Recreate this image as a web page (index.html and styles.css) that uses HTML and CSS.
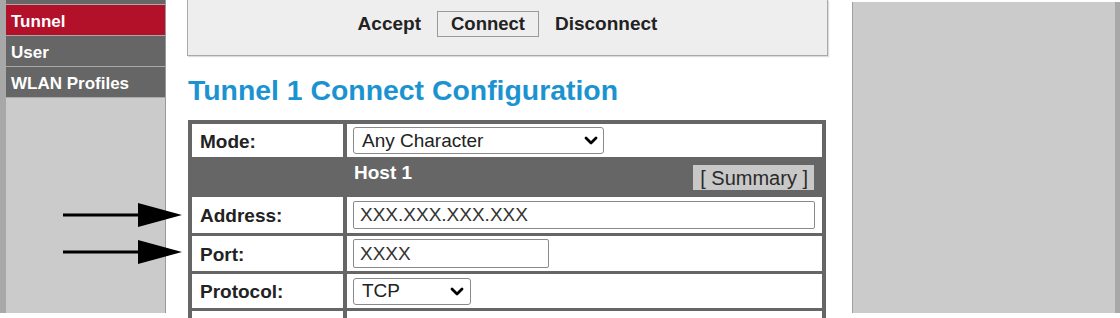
FILE: index.html
```html
<!DOCTYPE html>
<html lang="en">
<head>
<meta charset="utf-8">
<title>Tunnel 1 Connect Configuration</title>
<link rel="stylesheet" href="styles.css">
</head>
<body>
<div class="page">
  <div class="edge"></div>
  <nav class="sidebar">
    <div class="nav-cut"></div>
    <a class="nav-item active">Tunnel</a>
    <a class="nav-item">User</a>
    <a class="nav-item">WLAN Profiles</a>
  </nav>
  <main class="main">
    <div class="actions">
      <span class="action">Accept</span>
      <span class="action current">Connect</span>
      <span class="action">Disconnect</span>
    </div>
    <h1 class="title">Tunnel 1 Connect Configuration</h1>
    <div class="config">
      <div class="label">Mode:</div>
      <div class="field">
        <div class="select select-mode"><span>Any Character</span>
          <svg class="chev" width="14" height="9" viewBox="0 0 14 9"><path d="M2 2 L7 7 L12 2" fill="none" stroke="#000" stroke-width="2.8" stroke-linecap="round" stroke-linejoin="round"/></svg>
        </div>
      </div>
      <div class="label dark"></div>
      <div class="field host">
        <span class="host-title">Host 1</span>
        <span class="summary">[ Summary ]</span>
      </div>
      <div class="label">Address:</div>
      <div class="field"><input class="input input-address" type="text" value="XXX.XXX.XXX.XXX"></div>
      <div class="label">Port:</div>
      <div class="field"><input class="input input-port" type="text" value="XXXX"></div>
      <div class="label">Protocol:</div>
      <div class="field">
        <div class="select select-proto"><span>TCP</span>
          <svg class="chev" width="14" height="9" viewBox="0 0 14 9"><path d="M2 2 L7 7 L12 2" fill="none" stroke="#000" stroke-width="2.8" stroke-linecap="round" stroke-linejoin="round"/></svg>
        </div>
      </div>
      <div class="label"></div>
      <div class="field"></div>
    </div>
  </main>
  <aside class="right"></aside>
  <div class="right-edge"></div>
  <svg class="arrows" width="200" height="318" viewBox="0 0 200 318">
    <rect x="63" y="213.5" width="77" height="3" fill="#000"/>
    <polygon points="138,203 182,215 138,227" fill="#000"/>
    <rect x="63" y="250.5" width="77" height="3" fill="#000"/>
    <polygon points="138,240 182,252 138,264" fill="#000"/>
  </svg>
</div>
</body>
</html>
```

FILE: styles.css
```css
* { box-sizing: border-box; }
html, body { margin: 0; padding: 0; background: #fff; }
body { font-family: "Liberation Sans", Arial, sans-serif; }

.page {
  position: relative;
  display: flex;
  align-items: flex-start;
  width: 1120px;
  height: 318px;
  overflow: hidden;
}

.edge { flex: none; width: 6px; height: 313px; background: #a8a8a8; }

.sidebar {
  flex: none;
  width: 160px;
  height: 313px;
  background: #cbcbcb;
  border-right: 1px solid #9a9a9a;
  display: flex;
  flex-direction: column;
}
.nav-cut { height: 5px; background: #666; border-bottom: 1px solid #aaa; }
.nav-item {
  display: flex;
  align-items: center;
  height: 31px;
  padding: 3px 0 0 5px;
  background: #666;
  color: #fff;
  font-weight: bold;
  font-size: 17px;
  border-bottom: 1px solid #a9a9a9;
}
.nav-item.active { background: #b3102a; }

.main { flex: none; width: 641px; margin-left: 21px; }

.actions {
  height: 56px;
  background: #eee;
  border: 1px solid #aaa;
  border-top: none;
  box-shadow: 1px 1px 1px #ddd;
  display: flex;
  justify-content: center;
  align-items: center;
  gap: 16px;
  padding-bottom: 7px;
}
.action { font-weight: bold; font-size: 19px; color: #222; }
.action.current {
  height: 26px;
  line-height: 24px;
  padding: 0 13px;
  border: 1px solid #999;
  font-size: 18.5px;
}

.title {
  margin: 18px 0 14px 1px;
  font-size: 28.4px;
  line-height: 32px;
  font-weight: bold;
  color: #1c93d1;
}

.config {
  margin-left: 1px;
  width: 638px;
  padding: 4px;
  background: #666;
  display: grid;
  grid-template-columns: 151px 1fr;
  grid-template-rows: 33px 34px 36px 35px 34px 40px;
  column-gap: 4px;
  row-gap: 3px;
}
.label {
  background: #fff;
  display: flex;
  align-items: center;
  padding: 2px 0 0 8px;
  font-weight: bold;
  font-size: 19px;
  color: #222;
}
.label.dark { background: #666; }
.field {
  background: #fff;
  display: flex;
  align-items: center;
  padding: 0 6px;
}
.field.host {
  background: #666;
  align-items: flex-start;
  justify-content: space-between;
  padding: 2px 8px 0 7px;
}
.host-title { color: #fff; font-weight: bold; font-size: 19px; line-height: 22px; }
.summary {
  margin-top: 3px;
  height: 25px;
  line-height: 26px;
  padding: 0 6px 0 7px;
  background: #c8c8c8;
  color: #2a2a2a;
  font-size: 20px;
}

.select {
  display: flex;
  align-items: center;
  justify-content: space-between;
  height: 27px;
  border: 1px solid #8a8a8a;
  border-radius: 3px;
  background: #fff;
  padding: 0 5px 0 8px;
  font-size: 19px;
  color: #222;
}
.select-mode { width: 251px; }
.select-proto { width: 118px; padding-right: 6px; }
.chev { flex: none; }

.input {
  height: 28px;
  border: 1px solid #8a8a8a;
  border-radius: 2px;
  padding: 0 0 0 6px;
  margin: 0;
  font-family: "Liberation Sans", Arial, sans-serif;
  font-size: 19px;
  color: #333;
  background: #fff;
  outline: none;
}
.input-address { width: 462px; }
.input-port { width: 196px; height: 29px; }

.right {
  flex: none;
  margin-left: 24px;
  margin-top: 2px;
  width: 263px;
  height: 311px;
  background: #cbcbcb;
  border-left: 1px solid #a0a0a0;
}
.right-edge { flex: none; margin-top: 2px; width: 5px; height: 311px; background: #a8a8a8; }

.arrows { position: absolute; left: 0; top: 0; }
```
